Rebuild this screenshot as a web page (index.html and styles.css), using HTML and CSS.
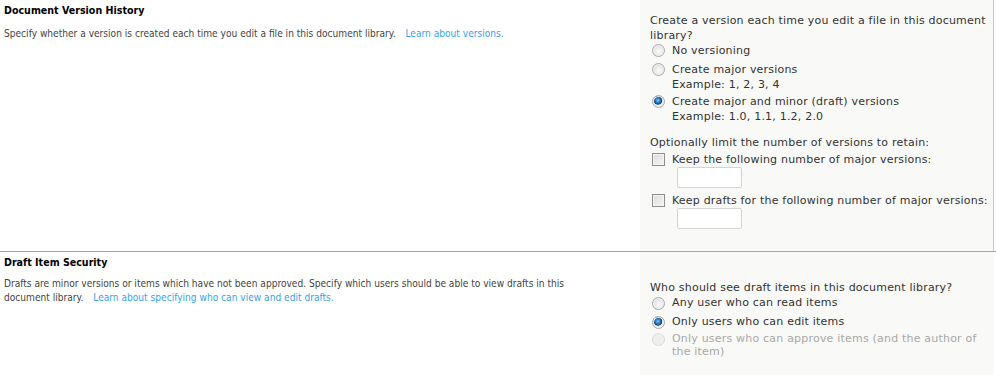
FILE: index.html
```html
<!DOCTYPE html>
<html lang="en">
<head>
  <meta charset="UTF-8">
  <title>Versioning Settings</title>
  <link rel="stylesheet" href="styles.css">
</head>
<body>
  <!-- Document Version History -->
  <div class="section section-versions">
    <div class="desc">
      <h3>Document Version History</h3>
      <p>Specify whether a version is created each time you edit a file in this document library. <a href="#">Learn about versions.</a></p>
    </div>
    <div class="options">
      <div class="question">Create a version each time you edit a file in this document library?</div>
      <label class="opt first"><input type="radio" name="ver"><span>No versioning</span></label>
      <label class="opt"><input type="radio" name="ver"><span>Create major versions<br>Example: 1, 2, 3, 4</span></label>
      <label class="opt"><input type="radio" name="ver" checked><span>Create major and minor (draft) versions<br>Example: 1.0, 1.1, 1.2, 2.0</span></label>

      <div class="question limit">Optionally limit the number of versions to retain:</div>
      <label class="opt check"><input type="checkbox"><span>Keep the following number of major versions:</span></label>
      <input type="text" class="num">
      <label class="opt check"><input type="checkbox"><span>Keep drafts for the following number of major versions:</span></label>
      <input type="text" class="num">
    </div>
  </div>

  <!-- Draft Item Security -->
  <div class="section section-drafts">
    <div class="desc">
      <h3>Draft Item Security</h3>
      <p class="narrow">Drafts are minor versions or items which have not been approved. Specify which users should be able to view drafts in this document library. <a href="#">Learn about specifying who can view and edit drafts.</a></p>
    </div>
    <div class="options">
      <div class="question">Who should see draft items in this document library?</div>
      <label class="opt"><input type="radio" name="draft"><span>Any user who can read items</span></label>
      <label class="opt"><input type="radio" name="draft" checked><span>Only users who can edit items</span></label>
      <label class="opt disabled"><input type="radio" name="draft" disabled><span>Only users who can approve items (and the author of the item)</span></label>
    </div>
  </div>
</body>
</html>
```

FILE: styles.css
```css
* { box-sizing: border-box; }
body {
  margin: 0;
  background: #fff;
  width: 996px;
  height: 375px;
  overflow: hidden;
}

/* 2 column rows: description left, controls on grey panel right */
.section {
  display: grid;
  grid-template-columns: 640px 354px;
}
.section-versions {
  height: 251px;
}
.section-drafts {
  border-top: 1px solid #a6a6a6;
  height: 124px;
}

.desc {
  padding: 0 4px;
  font-family: "DejaVu Sans Condensed", "DejaVu Sans", sans-serif;
  font-size: 10.1px;
  color: #444;
}
.desc h3 {
  margin: 3px 0 0;
  font-size: 10.6px;
  font-weight: bold;
  color: #000;
  line-height: 14px;
}
.desc p {
  margin: 10px 0 0;
  line-height: 14px;
}
.section-drafts .desc p {
  margin-top: 8px;
}
.desc p.narrow {
  width: 600px;
}
.desc a {
  color: #3a9ff0;
  text-decoration: none;
  margin-left: 7px;
}

.options {
  background: #f9f9f7;
  border-right: 1px solid #c8c8c8;
  padding: 13px 0 0 10px;
  font-family: "DejaVu Sans", Verdana, sans-serif;
  font-size: 11px;
  letter-spacing: 0.2px;
  color: #333;
  line-height: 15px;
}
.section-drafts .options {
  padding-top: 28px;
  border-right-color: #f9f9f7;
}
.question.limit {
  margin-top: 11px;
}
.section-drafts .question {
  margin-bottom: 1px;
}

.opt {
  display: flex;
  align-items: flex-start;
  gap: 7px;
  margin: 0 0 2px 2px;
}
.opt.first {
  margin-bottom: 4px;
}
.limit + .opt {
  margin-top: 2px;
}
.section-drafts .opt {
  line-height: 14px;
  margin-bottom: 5px;
}
.section-drafts .opt + .opt {
  margin-bottom: 3px;
}
.section-drafts .opt.disabled {
  line-height: 13px;
  color: #a8a8a8;
  padding-right: 8px;
}

/* radio and checkbox drawn the old Windows way */
.opt input {
  appearance: none;
  -webkit-appearance: none;
  flex: none;
  width: 13px;
  height: 13px;
  margin: 1px 0 0;
}
.opt input[type="radio"] {
  border-radius: 50%;
  border: 1px solid #a9a9a9;
  background: radial-gradient(circle at 55% 60%, #fbfbfb 0, #e6e6e6 55%, #cfcfcf 100%);
  box-shadow: inset 0 0 0 1px #f2f2f2;
}
.opt input[type="radio"]:checked {
  background:
    radial-gradient(circle at 45% 40%, #8cc6f2 0, #2b80c6 25%, #0e3c74 44%, #cfd8e0 50%, transparent 58%),
    radial-gradient(circle at 55% 60%, #fbfbfb 0, #e6e6e6 55%, #cfcfcf 100%);
}
.opt input[type="radio"]:disabled {
  border-color: #dadada;
  background: #efefef;
  box-shadow: none;
}
.opt.check {
  margin-bottom: 0;
  white-space: nowrap;
}
.opt input[type="checkbox"] {
  border: 1px solid #8e8e8e;
  background: linear-gradient(135deg, #dcdcdc, #f6f6f6);
  box-shadow: inset 0 0 0 1px #f4f4f4;
}

.num {
  display: block;
  width: 65px;
  height: 21px;
  margin: 0 0 5px 27px;
  border: 1px solid #d4d4d4;
  border-radius: 2px;
  background: #fff;
}
```
